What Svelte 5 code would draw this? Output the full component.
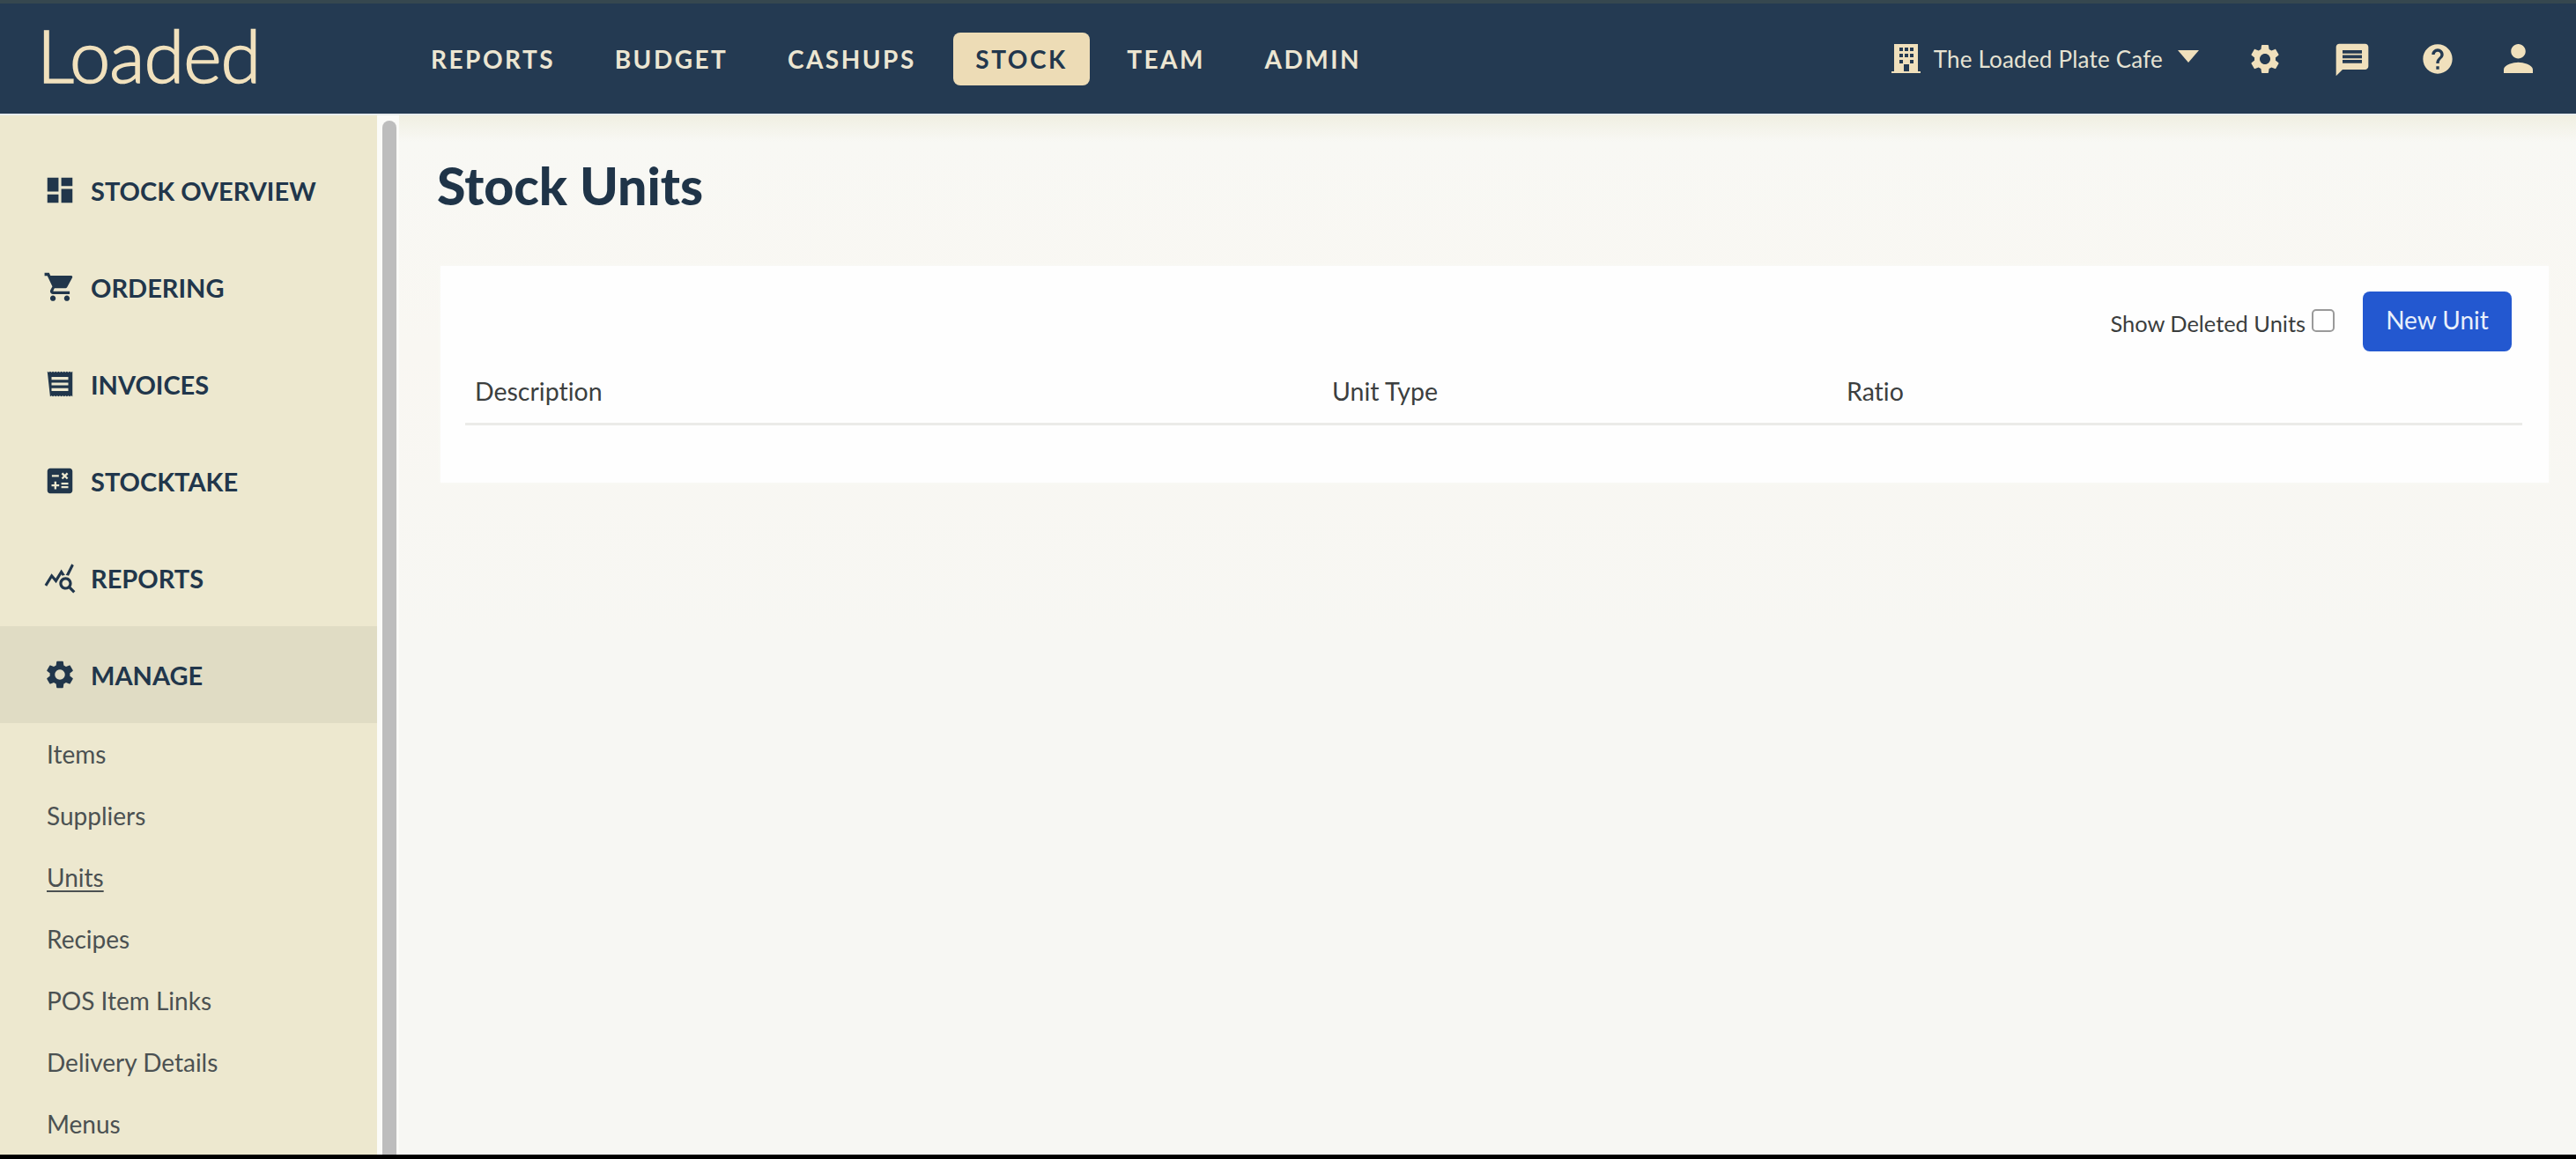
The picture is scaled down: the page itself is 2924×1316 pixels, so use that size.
<script>
  const topLinks = ["REPORTS", "BUDGET", "CASHUPS", "STOCK", "TEAM", "ADMIN"];
  const sideLinks = [
    { label: "STOCK OVERVIEW", d: "M3 13h8V3H3v10zm0 8h8v-6H3v6zm10 0h8V11h-8v10zm0-18v6h8V3h-8z" },
    { label: "ORDERING", d: "M7 18c-1.1 0-1.99.9-1.99 2S5.9 22 7 22s2-.9 2-2-.9-2-2-2zM1 2v2h2l3.6 7.59-1.35 2.45c-.16.28-.25.61-.25.96 0 1.1.9 2 2 2h12v-2H7.42c-.14 0-.25-.11-.25-.25l.03-.12.9-1.83h7.45c.75 0 1.41-.41 1.75-1.03l3.58-6.49c.08-.14.12-.31.12-.48 0-.55-.45-1-1-1H5.21l-.94-2H1zm16 16c-1.1 0-1.99.9-1.99 2s.89 2 1.99 2 2-.9 2-2-.9-2-2-2z" },
    { label: "INVOICES", d: "M3 3l1 .6L5 3l1 .6L7 3l1 .6L9 3l1 .6L11 3l1 .6L13 3l1 .6L15 3l1 .6L17 3l1 .6L19 3l1 .6L21 3v18l-1-.6-1 .6-1-.6-1 .6-1-.6-1 .6-1-.6-1 .6-1-.6-1 .6-1-.6-1 .6-1-.6-1 .6-1-.6-1 .6zM6 7v2h12V7zm0 4v2h12v-2zm0 4v2h12v-2z" },
    { label: "STOCKTAKE", d: "M19 3H5c-1.1 0-2 .9-2 2v14c0 1.1.9 2 2 2h14c1.1 0 2-.9 2-2V5c0-1.1-.9-2-2-2zM13.03 7.06L14.09 6l1.41 1.41L16.91 6l1.06 1.06-1.41 1.41 1.41 1.41-1.06 1.06-1.41-1.41-1.41 1.41-1.06-1.06 1.41-1.41zM6.25 7.72h5v1.5h-5zM11.5 16h-2v2H8v-2H6v-1.5h2v-2h1.5v2h2zm6.5 1.25h-5v-1.5h5zm0-2.5h-5v-1.5h5z" },
    { label: "REPORTS", d: "M19.88 18.47c.44-.7.7-1.51.7-2.39 0-2.49-2.01-4.5-4.5-4.5s-4.5 2.01-4.5 4.5 2.01 4.5 4.49 4.5c.88 0 1.7-.26 2.39-.7L21.58 23 23 21.58zm-3.8.11c-1.38 0-2.5-1.12-2.5-2.5s1.12-2.5 2.5-2.5 2.5 1.12 2.5 2.5-1.12 2.5-2.5 2.5zm-.36-8.5c-.74.02-1.45.18-2.1.45l-.55-.83-3.8 6.18-3.01-3.52-3.63 5.81L1 17l5-8 3 3.5L13 6zm2.59.5c-.64-.28-1.33-.45-2.05-.49L20.38 2 22 3.18z" },
    { label: "MANAGE", active: true, d: "M19.14 12.94c.04-.3.06-.61.06-.94 0-.32-.02-.64-.07-.94l2.03-1.58c.18-.14.23-.41.12-.61l-1.92-3.32c-.12-.22-.37-.29-.59-.22l-2.39.96c-.5-.38-1.03-.7-1.62-.94l-.36-2.54c-.04-.24-.24-.41-.48-.41h-3.84c-.24 0-.43.17-.47.41l-.36 2.54c-.59.24-1.13.57-1.62.94l-2.39-.96c-.22-.08-.47 0-.59.22L2.74 8.87c-.12.21-.08.47.12.61l2.03 1.58c-.05.3-.09.63-.09.94s.02.64.07.94l-2.03 1.58c-.18.14-.23.41-.12.61l1.92 3.32c.12.22.37.29.59.22l2.39-.96c.5.38 1.03.7 1.62.94l.36 2.54c.05.24.24.41.48.41h3.84c.24 0 .44-.17.47-.41l.36-2.54c.59-.24 1.13-.56 1.62-.94l2.39.96c.22.08.47 0 .59-.22l1.92-3.32c.12-.22.07-.47-.12-.61l-2.01-1.58zM12 15.6c-1.98 0-3.6-1.62-3.6-3.6s1.62-3.6 3.6-3.6 3.6 1.62 3.6 3.6-1.62 3.6-3.6 3.6z" }
  ];
  const subLinks = ["Items", "Suppliers", "Units", "Recipes", "POS Item Links", "Delivery Details", "Menus"];
  const columns = ["Description", "Unit Type", "Ratio"];

  const gear = sideLinks[5].d;
</script>

<div class="page">
  <header class="topbar">
    <div class="logo">Loaded</div>
    <nav class="toplinks">
      {#each topLinks as link}
        <a class="toplink" class:current={link === "STOCK"} href="#top">{link}</a>
      {/each}
    </nav>
    <div class="tools">
      <svg class="building" viewBox="0 0 33 33">
        <path fill-rule="evenodd" d="M3 0h27v31h3v2H0v-2h3zM9 4v4h4V4zm6 0v4h4V4zm6 0v4h4V4zM9 11v4h4v-4zm6 0v4h4v-4zm6 0v4h4v-4zM9 18v4h4v-4zm12 0v4h4v-4zm-7 5v8h6v-8z" />
      </svg>
      <span class="venue">The Loaded Plate Cafe</span>
      <svg class="caret" viewBox="0 0 24 14"><path d="M0 0h24L12 14z" /></svg>
      <svg class="tool gear" viewBox="0 0 24 24"><path d={gear} /></svg>
      <svg class="tool chat" viewBox="0 0 24 24"><path d="M20 2H4c-1.1 0-2 .9-2 2v18l4-4h14c1.1 0 2-.9 2-2V4c0-1.1-.9-2-2-2zM18 14H6v-2h12zm0-3H6V9h12zm0-3H6V6h12z" /></svg>
      <svg class="tool help" viewBox="0 0 24 24"><path d="M12 2C6.48 2 2 6.48 2 12s4.48 10 10 10 10-4.48 10-10S17.52 2 12 2zm1 17h-2v-2h2v2zm2.07-7.75l-.9.92C13.45 12.9 13 13.5 13 15h-2v-.5c0-1.1.45-2.1 1.17-2.83l1.24-1.26c.37-.36.59-.86.59-1.41 0-1.1-.9-2-2-2s-2 .9-2 2H8c0-2.21 1.79-4 4-4s4 1.79 4 4c0 .88-.36 1.68-.93 2.25z" /></svg>
      <svg class="tool person" viewBox="4 4 16 16"><path d="M12 12c2.21 0 4-1.79 4-4s-1.79-4-4-4-4 1.79-4 4 1.79 4 4 4zm0 2c-2.67 0-8 1.34-8 4v2h16v-2c0-2.66-5.33-4-8-4z" /></svg>
    </div>
  </header>

  <div class="body">
    <aside class="sidebar">
      <nav class="sidenav">
        {#each sideLinks as link}
          <a class="sidelink" class:active={link.active} href="#top">
            <svg class="sideicon" viewBox="0 0 24 24"><path fill-rule="evenodd" d={link.d} /></svg>
            {link.label}
          </a>
        {/each}
        <div class="sublinks">
          {#each subLinks as link}
            <a class="sublink" class:selected={link === "Units"} href="#top">{link}</a>
          {/each}
        </div>
      </nav>
      <div class="scrolltrack"><div class="scrollthumb"></div></div>
    </aside>

    <main class="content">
      <h1>Stock Units</h1>
      <section class="card">
        <div class="actions">
          <label class="deleted">
            <span class="deletedtext">Show Deleted Units</span>
            <input type="checkbox" />
          </label>
          <button class="newunit">New Unit</button>
        </div>
        <div class="thead">
          {#each columns as col}
            <span class="col">{col}</span>
          {/each}
        </div>
      </section>
    </main>
  </div>
</div>

<style>
  :global(body) {
    margin: 0;
    background: #000;
  }

  .page {
    width: 2924px;
    height: 1311px;
    display: flex;
    flex-direction: column;
    overflow: hidden;
    font-family: Lato, "Noto Sans", sans-serif;
    font-variant-ligatures: none;
    background: #f7f7f3;
  }

  a {
    text-decoration: none;
  }

  /* top bar */
  .topbar {
    flex: none;
    height: 125px;
    border-top: 4px solid #36474f;
    background: #243a52;
    display: flex;
    align-items: center;
    box-sizing: content-box;
  }

  .logo {
    width: 464px;
    box-sizing: border-box;
    padding-left: 42px;
    margin-top: -8px;
    font-size: 83px;
    font-weight: 300;
    letter-spacing: -1px;
    line-height: 1;
    color: #f1e1bd;
    -webkit-text-stroke: 1.6px #f1e1bd;
  }

  .toplinks {
    display: flex;
    gap: 17.5px;
  }

  .toplink {
    height: 60px;
    padding: 0 25px;
    display: flex;
    align-items: center;
    border-radius: 8px;
    font-size: 28px;
    font-weight: 700;
    letter-spacing: 2.5px;
    color: #ece6d2;
  }

  .toplink.current {
    background: #eddcb6;
    color: #22374d;
  }

  .tools {
    margin-left: auto;
    padding-right: 49px;
    display: flex;
    align-items: center;
    fill: #f0e0bc;
  }

  .building {
    width: 33px;
    height: 33px;
    margin-right: 15px;
  }

  .venue {
    font-size: 26px;
    color: #e6e3d3;
    letter-spacing: 0.2px;
  }

  .caret {
    width: 24px;
    height: 14px;
    margin: -6px 55px 0 17px;
  }

  .tool {
    display: block;
  }

  .gear {
    width: 40px;
    height: 40px;
  }

  .chat {
    width: 44px;
    height: 44px;
    margin: 2px 0 0 57px;
  }

  .help {
    width: 40px;
    height: 40px;
    margin-left: 55px;
  }

  .person {
    width: 33px;
    height: 33px;
    margin-left: 55px;
  }

  /* below the bar */
  .body {
    flex: 1;
    min-height: 0;
    display: flex;
    border-top: 2px solid #e8edee;
  }

  .sidebar {
    flex: none;
    width: 453px;
    display: flex;
    background: #fbfbf8;
  }

  .sidenav {
    width: 428px;
    background: #ede8cf;
    padding-top: 30px;
  }

  .sidelink {
    height: 110px;
    padding-left: 49px;
    display: flex;
    align-items: center;
    gap: 16px;
    font-size: 29px;
    font-weight: 700;
    color: #21364b;
  }

  .sidelink.active {
    background: #e0dcc4;
  }

  .sideicon {
    width: 38px;
    height: 38px;
    fill: #21364b;
  }

  .sublink {
    height: 70px;
    padding-left: 53px;
    display: flex;
    align-items: center;
    font-size: 28px;
    color: #4b5152;
  }

  .sublink.selected {
    text-decoration: underline;
    text-underline-offset: 4px;
  }

  .scrolltrack {
    padding: 6px 3px 0 6px;
  }

  .scrollthumb {
    width: 16px;
    height: 100%;
    border-radius: 8px 8px 0 0;
    background: #bdbdbd;
  }

  .content {
    flex: 1;
    min-width: 0;
    padding: 0 31px 0 47px;
    background: linear-gradient(#f0efe2, #f8f8f4 30px, #f9f7f2 260px, #f7f7f3 600px);
  }

  h1 {
    margin: 0 0 0 -4px;
    padding-top: 47px;
    font-size: 59px;
    font-weight: 900;
    line-height: 66px;
    color: #1f3448;
  }

  .card {
    margin-top: 58px;
    height: 246px;
    box-sizing: border-box;
    padding: 29px 30px 0 28px;
    background: #fefefe;
    box-shadow: 0 0 4px #fbfbf7;
  }

  .actions {
    display: flex;
    justify-content: flex-end;
    align-items: center;
    padding-right: 12px;
  }

  .deleted {
    display: flex;
    align-items: center;
    gap: 7px;
    font-size: 25.4px;
    color: #3a3d3d;
  }

  .deletedtext {
    padding-top: 4px;
  }

  .deleted input {
    appearance: none;
    width: 26px;
    height: 26px;
    margin: -3px 0 0;
    box-sizing: border-box;
    border: 2px solid #9a9a9a;
    border-radius: 5px;
    background: #fff;
  }

  .newunit {
    width: 169px;
    height: 68px;
    margin-left: 32px;
    padding: 0 0 4px;
    border: 0;
    border-radius: 8px;
    background: #2358d0;
    font-family: inherit;
    font-size: 28px;
    color: #e9f0fb;
  }

  .thead {
    margin-top: 13px;
    height: 71px;
    box-sizing: border-box;
    display: grid;
    grid-template-columns: 973px 584px 1fr;
    align-items: center;
    padding: 0 0 5px 11px;
    border-bottom: 3px solid #ebebe8;
  }

  .col {
    font-size: 28.5px;
    color: #3c3f3f;
  }
</style>
